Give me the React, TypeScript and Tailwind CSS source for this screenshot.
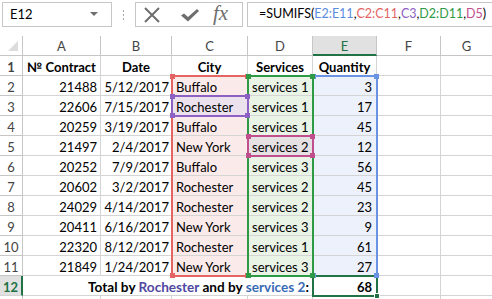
import React from "react";

const rows: [number, string, string, string, number][] = [
  [21488, "5/12/2017", "Buffalo", "services 1", 3],
  [22606, "7/15/2017", "Rochester", "services 1", 17],
  [20259, "3/19/2017", "Buffalo", "services 1", 45],
  [21497, "2/4/2017", "New York", "services 2", 12],
  [20252, "7/9/2017", "Buffalo", "services 3", 56],
  [20602, "3/2/2017", "Rochester", "services 2", 45],
  [24029, "4/14/2017", "Rochester", "services 2", 23],
  [20411, "6/16/2017", "New York", "services 3", 9],
  [22320, "8/12/2017", "Rochester", "services 1", 61],
  [21849, "1/24/2017", "New York", "services 3", 27],
];

function RowHead({ n, active }: { n: number; active?: boolean }) {
  return active ? (
    <div className="w-[23px] h-[20px] shrink-0 border-b border-[#d4d4d4] border-r-2 border-r-[#217346] bg-[#e1e1e1] text-[#217346] text-center leading-[22px]">
      {n}
    </div>
  ) : (
    <div className="w-[23px] h-[20px] shrink-0 border-r border-b border-[#c6c6c6] text-[#444] text-center leading-[22px]">
      {n}
    </div>
  );
}

function Handle({ color, pos }: { color: string; pos: string }) {
  return <div className={`absolute w-[5px] h-[5px] ${pos}`} style={{ backgroundColor: color }} />;
}

type Box = { left: number; top: number; w: number; h: number; color: string; all?: boolean };

const boxes: Box[] = [
  { left: 171, top: 39, w: 78, h: 202, color: "#e46464", all: true },
  { left: 312, top: 39, w: 66, h: 202, color: "#6b93e4", all: true },
  { left: 247, top: 39, w: 67, h: 202, color: "#2f9a45", all: true },
  { left: 171, top: 59, w: 78, h: 22, color: "#8d60c4", all: true },
  { left: 247, top: 99, w: 67, h: 22, color: "#c14f8e", all: true },
  { left: 312, top: 239, w: 66, h: 22, color: "#217346", all: false },
];

function Borders() {
  return (
    <>
      {boxes.map((b, i) => (
        <div
          key={"b" + i}
          className="absolute border-2 pointer-events-none"
          style={{ left: b.left, top: b.top, width: b.w, height: b.h, borderColor: b.color }}
        />
      ))}
      {boxes.map((b, i) => (
        <div
          key={"h" + i}
          className="absolute pointer-events-none"
          style={{ left: b.left, top: b.top, width: b.w, height: b.h }}
        >
          {b.all ? (
            <>
              <Handle color={b.color} pos="-left-[1px] -top-[1px]" />
              <Handle color={b.color} pos="-right-[1px] -top-[1px]" />
              <Handle color={b.color} pos="-left-[1px] -bottom-[1px]" />
              <Handle color={b.color} pos="-right-[1px] -bottom-[1px]" />
            </>
          ) : (
            <div className="absolute -right-[2px] -bottom-[2px] w-[6px] h-[6px] bg-[#217346] border border-white" />
          )}
        </div>
      ))}
    </>
  );
}

export default function App() {
  return (
    <div className="w-[492px] h-[299px] overflow-hidden bg-white text-[13px] text-black font-['Lato',sans-serif]">
      {/* Formula bar */}
      <div className="flex items-start h-[36px] pt-[2px] pl-[2px]">
        <div className="w-[110px] h-[25px] shrink-0 border border-[#c6c6c6] flex items-center justify-between pl-[7px] pr-[13px]">
          <span className="text-[13px] text-black leading-none">E12</span>
          <svg width="8" height="5" viewBox="0 0 8 5">
            <path d="M0 0 H8 L4 4 Z" fill="#6e6e6e" />
          </svg>
        </div>
        <div className="w-[23px] h-[25px] shrink-0 flex flex-col items-center justify-center gap-[2px]">
          <div className="w-[1px] h-[2px] bg-[#a8a8a8]" />
          <div className="w-[1px] h-[2px] bg-[#a8a8a8]" />
          <div className="w-[1px] h-[2px] bg-[#a8a8a8]" />
        </div>
        <div className="w-[108px] h-[25px] shrink-0 border border-[#c6c6c6] flex items-center pl-[6px]">
          <svg width="18" height="18" viewBox="0 0 18 18" className="ml-[1px]">
            <path d="M2 2 L16 16 M16 2 L2 16" stroke="#6e6e6e" strokeWidth="2" />
          </svg>
          <svg width="20" height="18" viewBox="0 0 20 18" className="ml-[19px]">
            <path d="M1 9.5 L4 7.5 L8 11 L17 3 L19 5 L8 15.5 Z" fill="#6e6e6e" />
          </svg>
          <span className="ml-[13px] font-['Liberation_Serif',serif] italic text-[21px] leading-none text-[#6e6e6e] -mt-[3px]">
            fx
          </span>
        </div>
        <div className="flex-1 h-[25px] ml-[4px] border border-r-0 border-[#c6c6c6] flex items-center pl-[11px] whitespace-nowrap text-[12.5px] leading-none">
          <span>=SUMIFS(</span>
          <span className="text-[#5b8ce0]">E2:E11</span>
          <span>,</span>
          <span className="text-[#e46464]">C2:C11</span>
          <span>,</span>
          <span className="text-[#8d60c4]">C3</span>
          <span>,</span>
          <span className="text-[#2f9a45]">D2:D11</span>
          <span>,</span>
          <span className="text-[#c14f8e]">D5</span>
          <span>)</span>
        </div>
      </div>

      {/* Grid */}
      <div className="relative">
        {/* Column headers */}
        <div className="flex h-[20px] text-[#444] leading-[20px] text-center">
          <div className="w-[23px] shrink-0 border-r border-b border-[#c6c6c6] relative">
            <svg width="10" height="10" viewBox="0 0 10 10" className="absolute right-[4px] bottom-[4px]">
              <path d="M10 0 V10 H0 Z" fill="#dcdcdc" />
            </svg>
          </div>
          <div className="w-[78px] shrink-0 border-r border-b border-[#c6c6c6]">A</div>
          <div className="w-[71px] shrink-0 border-r border-b border-[#c6c6c6]">B</div>
          <div className="w-[76px] shrink-0 border-r border-b border-[#c6c6c6]">C</div>
          <div className="w-[65px] shrink-0 border-r border-b border-[#c6c6c6]">D</div>
          <div className="w-[64px] shrink-0 border-r border-[#c6c6c6] border-b-2 border-b-[#217346] bg-[#e1e1e1] text-[#217346]">
            E
          </div>
          <div className="w-[64px] shrink-0 border-r border-b border-[#c6c6c6]">F</div>
          <div className="flex-1 border-b border-[#c6c6c6]">G</div>
        </div>

        {/* Row 1 */}
        <div className="flex h-[20px] leading-[22px] font-bold">
          <RowHead n={1} />
          <div className="w-[78px] shrink-0 border-r border-b border-[#d4d4d4] text-center">№ Contract</div>
          <div className="w-[71px] shrink-0 border-r border-b border-[#d4d4d4] text-center">Date</div>
          <div className="w-[76px] shrink-0 border-r border-b border-[#d4d4d4] text-center">City</div>
          <div className="w-[65px] shrink-0 border-r border-b border-[#d4d4d4] text-center">Services</div>
          <div className="w-[64px] shrink-0 border-r border-b border-[#d4d4d4] text-center">Quantity</div>
          <div className="w-[64px] shrink-0 border-r border-b border-[#d4d4d4]" />
          <div className="flex-1 border-b border-[#d4d4d4]" />
        </div>

        {rows.map((r, i) => {
          const n = i + 2;
          return (
            <div key={n} className="flex h-[20px] leading-[22px] whitespace-nowrap">
              <div className="w-[23px] shrink-0 border-r border-b border-[#c6c6c6] text-[#444] text-center font-normal">
                {n}
              </div>
              <div className="w-[78px] shrink-0 border-r border-b border-[#d4d4d4] text-right pr-[3px]">{r[0]}</div>
              <div className="w-[71px] shrink-0 border-r border-b border-[#d4d4d4] text-right pr-[2px]">{r[1]}</div>
              <div
                className={
                  n === 3
                    ? "w-[76px] shrink-0 border-r border-b border-[#d4d4d4] bg-[#ece2ee] pl-[4px]"
                    : "w-[76px] shrink-0 border-r border-b border-[#d4d4d4] bg-[#fbeaea] pl-[4px]"
                }
              >
                {r[2]}
              </div>
              <div
                className={
                  n === 5
                    ? "w-[65px] shrink-0 border-r border-b border-[#d4d4d4] bg-[#e6e1e3] pl-[4px]"
                    : "w-[65px] shrink-0 border-r border-b border-[#d4d4d4] bg-[#e9f3e6] pl-[4px]"
                }
              >
                {r[3]}
              </div>
              <div className="w-[64px] shrink-0 border-r border-b border-[#d4d4d4] bg-[#ecf1fb] text-right pr-[4px]">
                {r[4]}
              </div>
              <div className="w-[64px] shrink-0 border-r border-b border-[#d4d4d4]" />
              <div className="flex-1 border-b border-[#d4d4d4]" />
            </div>
          );
        })}

        {/* Row 12 */}
        <div className="flex h-[20px] leading-[22px] whitespace-nowrap font-bold">
          <RowHead n={12} active />
          <div className="w-[290px] shrink-0 border-r border-b border-[#d4d4d4] text-right pr-[3px] text-[13.6px]">
            Total by <span className="text-[#4f48a0]">Rochester</span> and by{" "}
            <span className="text-[#3a6bb5]">services 2</span>:
          </div>
          <div className="w-[64px] shrink-0 border-r border-b border-[#d4d4d4] text-right pr-[4px]">68</div>
          <div className="w-[64px] shrink-0 border-r border-b border-[#d4d4d4]" />
          <div className="flex-1 border-b border-[#d4d4d4]" />
        </div>

        {/* Row 13 partial */}
        <div className="flex h-[20px]">
          <div className="w-[23px] shrink-0 border-r border-[#c6c6c6]" />
          <div className="w-[78px] shrink-0 border-r border-[#d4d4d4]" />
          <div className="w-[71px] shrink-0 border-r border-[#d4d4d4]" />
          <div className="w-[76px] shrink-0 border-r border-[#d4d4d4]" />
          <div className="w-[65px] shrink-0 border-r border-[#d4d4d4]" />
          <div className="w-[64px] shrink-0 border-r border-[#d4d4d4]" />
          <div className="w-[64px] shrink-0 border-r border-[#d4d4d4]" />
          <div className="flex-1" />
        </div>

        <Borders />
      </div>
    </div>
  );
}
